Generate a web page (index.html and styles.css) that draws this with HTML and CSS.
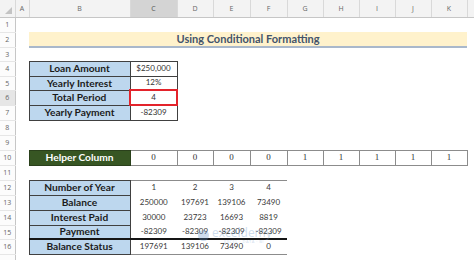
FILE: index.html
```html
<!DOCTYPE html>
<html lang="en">
<head>
<meta charset="UTF-8">
<meta name="viewport" content="width=device-width, initial-scale=1.0">
<title>Using Conditional Formatting</title>
<link rel="stylesheet" href="styles.css">
</head>
<body>
  <div class="book">
    <table class="sheet">
      <colgroup>
        <col class="w-rh">
        <col class="w-a">
        <col class="w-b">
        <col class="w-c">
        <col class="w-d">
        <col class="w-ef">
        <col class="w-ef">
        <col class="w-n" span="5">
        <col class="w-rest">
      </colgroup>
      <thead>
        <tr>
          <th class="corner"><span class="tri"></span></th>
          <th>A</th><th>B</th><th class="sel">C</th><th>D</th><th>E</th><th>F</th>
          <th>G</th><th>H</th><th>I</th><th>J</th><th>K</th><th></th>
        </tr>
      </thead>
      <tbody>
        <tr><th class="rh">1</th><td colspan="12"></td></tr>
        <tr>
          <th class="rh">2</th><td></td>
          <td class="title" colspan="10">Using Conditional Formatting</td><td></td>
        </tr>
        <tr class="short"><th class="rh">3</th><td colspan="12"></td></tr>

        <!-- loan inputs -->
        <tr><th class="rh">4</th><td></td><td class="lbl">Loan Amount</td><td class="val">$250,000</td><td colspan="9"></td></tr>
        <tr class="short"><th class="rh">5</th><td></td><td class="lbl">Yearly Interest</td><td class="val">12%</td><td colspan="9"></td></tr>
        <tr><th class="rh sel">6</th><td></td><td class="lbl">Total Period</td><td class="val pick">4</td><td colspan="9"></td></tr>
        <tr><th class="rh">7</th><td></td><td class="lbl">Yearly Payment</td><td class="val">-82309</td><td colspan="9"></td></tr>

        <tr><th class="rh">8</th><td colspan="12"></td></tr>
        <tr><th class="rh">9</th><td colspan="12"></td></tr>

        <!-- 0 until the period is reached, then 1 -->
        <tr>
          <th class="rh">10</th><td></td><td class="helper">Helper Column</td>
          <td class="bin">0</td><td class="bin">0</td><td class="bin">0</td><td class="bin">0</td>
          <td class="bin">1</td><td class="bin">1</td><td class="bin">1</td><td class="bin">1</td><td class="bin">1</td>
          <td></td>
        </tr>

        <tr><th class="rh">11</th><td colspan="12"></td></tr>

        <!-- amortization -->
        <tr>
          <th class="rh">12</th><td></td><td class="lbl">Number of Year</td>
          <td class="num top">1</td><td class="num top">2</td><td class="num top">3</td><td class="num top">4</td>
          <td colspan="6"></td>
        </tr>
        <tr>
          <th class="rh">13</th><td></td><td class="lbl">Balance</td>
          <td class="num">250000</td><td class="num">197691</td><td class="num">139106</td><td class="num">73490</td>
          <td colspan="6"></td>
        </tr>
        <tr>
          <th class="rh">14</th><td></td><td class="lbl">Interest Paid</td>
          <td class="num">30000</td><td class="num">23723</td><td class="num">16693</td><td class="num">8819</td>
          <td colspan="6"></td>
        </tr>
        <tr class="short">
          <th class="rh">15</th><td></td><td class="lbl">Payment</td>
          <td class="num">-82309</td><td class="num">-82309</td><td class="num">-82309</td><td class="num">-82309</td>
          <td colspan="6"></td>
        </tr>
        <tr>
          <th class="rh">16</th><td></td><td class="lbl total">Balance Status</td>
          <td class="num total">197691</td><td class="num total">139106</td><td class="num total">73490</td><td class="num total">0</td>
          <td colspan="6"></td>
        </tr>
        <tr><th class="rh"></th><td colspan="12"></td></tr>
      </tbody>
    </table>

    <!-- site watermark -->
    <div class="mark">
      <span class="mark-dot"></span>
      <span class="mark-text">exceldemy<small>EXCEL · DATA · BI</small></span>
    </div>
  </div>
</body>
</html>
```

FILE: styles.css
```css
body {
  margin: 0;
  background: #fff;
  font-family: Lato, 'Liberation Sans', sans-serif;
  overflow: hidden;
}

.book {
  position: relative;
  width: 474px;
  height: 260px;
  overflow: hidden;
}

.sheet {
  border-collapse: collapse;
  table-layout: fixed;
  width: 474px;
}

/* column widths */
.w-rh { width: 15px; }
.w-a { width: 14px; }
.w-b { width: 101px; }
.w-c { width: 47px; }
.w-d { width: 36px; }
.w-ef { width: 37px; }
.w-n { width: 36px; }
.w-rest { width: 7px; }

.sheet tbody tr {
  height: 15px;
}

.sheet tbody tr.short {
  height: 14px;
}

.sheet td,
.sheet th {
  padding: 0;
  font-size: 8px;
  line-height: 9px;
  text-align: center;
  white-space: nowrap;
  overflow: hidden;
}

/* column letters */
.sheet thead tr {
  height: 17px;
}

.sheet thead th {
  background: #f3f3f3;
  color: #666;
  font-family: 'Open Sans', sans-serif;
  font-weight: normal;
  font-size: 7px;
  border-right: 1px solid #d9d9d9;
  border-bottom: 1px solid #c6c6c6;
}

.sheet thead th.sel {
  background: #d4d4d4;
  color: #555;
}

.corner {
  position: relative;
}

.tri {
  position: absolute;
  right: 3px;
  bottom: 3px;
  width: 0;
  height: 0;
  border-left: 7px solid transparent;
  border-bottom: 7px solid #c3c3c3;
}

/* row numbers */
.sheet .rh {
  background: #fcfcfc;
  color: #666;
  font-family: 'Open Sans', sans-serif;
  font-weight: normal;
  font-size: 7px;
  border-right: 1px solid #c6c6c6;
  border-bottom: 1px solid #e6e6e6;
}

.sheet .rh.sel {
  background: #e6e6e6;
}

.sheet .title {
  background: #fff2cc;
  border-bottom: 2px solid #a9b8cb;
  color: #44546a;
  font-weight: bold;
  font-size: 11px;
  line-height: 12px;
}

.sheet .lbl {
  background: #bdd7ee;
  border: 1px solid #404040;
  color: #1b1b1b;
  font-weight: bold;
  font-size: 10.2px;
  line-height: 11px;
}

.val {
  border: 1px solid #404040;
  color: #333;
}

/* selected cell on the input table */
.sheet .pick {
  border: 2px solid #e3232b;
}

.sheet .helper {
  background: #375623;
  border: 1px solid #2a401b;
  color: #fff;
  font-weight: bold;
  font-size: 10.2px;
  line-height: 11px;
}

.sheet .bin {
  border: 1px solid #8c8c8c;
  color: #333;
  font-family: 'Liberation Serif', serif;
  font-size: 9px;
}

.num {
  color: #3a3a3a;
}

.num.top {
  border-top: 1px solid #8c8c8c;
}

.sheet .total {
  border-top: 2px solid #151515;
}

.num.total {
  border-bottom: 1px solid #8c8c8c;
}

.mark {
  position: absolute;
  left: 198px;
  top: 227px;
  display: flex;
  align-items: center;
  gap: 3px;
  opacity: 0.3;
  pointer-events: none;
}

.mark-dot {
  width: 11px;
  height: 11px;
  border-radius: 50%;
  background: #5b8fc7;
}

.mark-text {
  display: flex;
  flex-direction: column;
  color: #5b8fc7;
  font-family: 'Open Sans', sans-serif;
  font-size: 12px;
  line-height: 12px;
}

.mark-text small {
  font-size: 4px;
  line-height: 5px;
  letter-spacing: 0.5px;
  padding-left: 12px;
}
```
